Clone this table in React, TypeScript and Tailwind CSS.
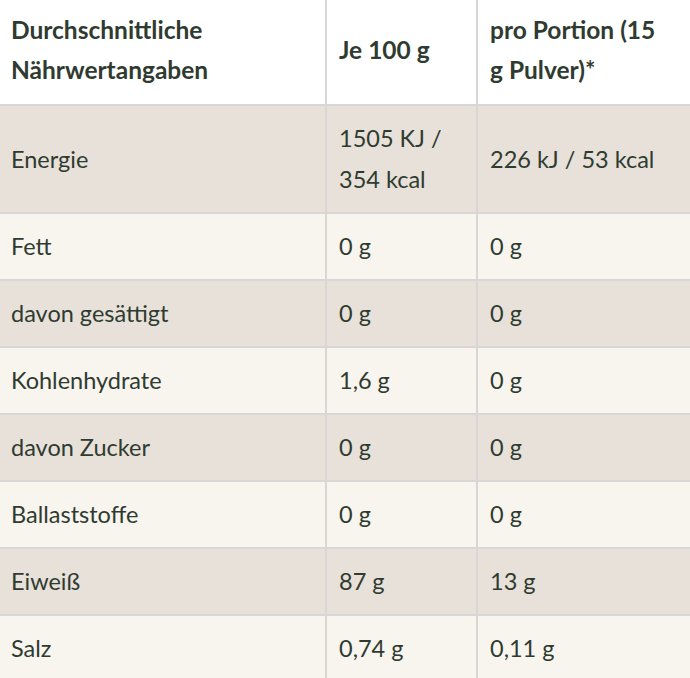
const rows: { label: string; per100: string; portion: string }[] = [
  { label: 'Energie', per100: '1505 KJ / 354 kcal', portion: '226 kJ / 53 kcal' },
  { label: 'Fett', per100: '0 g', portion: '0 g' },
  { label: 'davon gesättigt', per100: '0 g', portion: '0 g' },
  { label: 'Kohlenhydrate', per100: '1,6 g', portion: '0 g' },
  { label: 'davon Zucker', per100: '0 g', portion: '0 g' },
  { label: 'Ballaststoffe', per100: '0 g', portion: '0 g' },
  { label: 'Eiweiß', per100: '87 g', portion: '13 g' },
  { label: 'Salz', per100: '0,74 g', portion: '0,11 g' },
];

export default function App() {
  return (
    <div className="w-[690px] h-[678px] overflow-hidden bg-[#f8f4ee] font-['Lato','Liberation_Sans',sans-serif] text-[23.5px] text-[#2f3b30]">
      {/* header */}
      <div className="grid grid-cols-[327px_151px_1fr] bg-white border-b-2 border-[#d9d7d5] font-bold text-[24.5px] leading-[40px]">
        <div className="pl-[11px] pr-3 pt-[10px] pb-[14px] border-r-2 border-[#d9d7d5]">
          Durchschnittliche Nährwertangaben
        </div>
        <div className="px-3 pt-[10px] pb-[14px] border-r-2 border-[#d9d7d5] flex items-center">Je 100 g</div>
        <div className="pl-3 pr-6 pt-[10px] pb-[14px]">pro Portion (15 g Pulver)*</div>
      </div>

      {rows.map((row, i) => (
        <div
          key={row.label}
          className={
            'grid grid-cols-[327px_151px_1fr] border-b-2 border-[#d9d7d5] leading-[41px] ' +
            (i % 2 === 0 ? 'bg-[#e7e1d9]' : 'bg-[#f8f4ee]')
          }
        >
          <div className="pl-[11px] pr-3 py-3 border-r-2 border-[#d9d7d5] flex items-center">
            {row.label}
          </div>
          <div className="px-3 py-3 border-r-2 border-[#d9d7d5] flex items-center">{row.per100}</div>
          <div className="px-3 py-3 flex items-center">{row.portion}</div>
        </div>
      ))}
    </div>
  );
}
